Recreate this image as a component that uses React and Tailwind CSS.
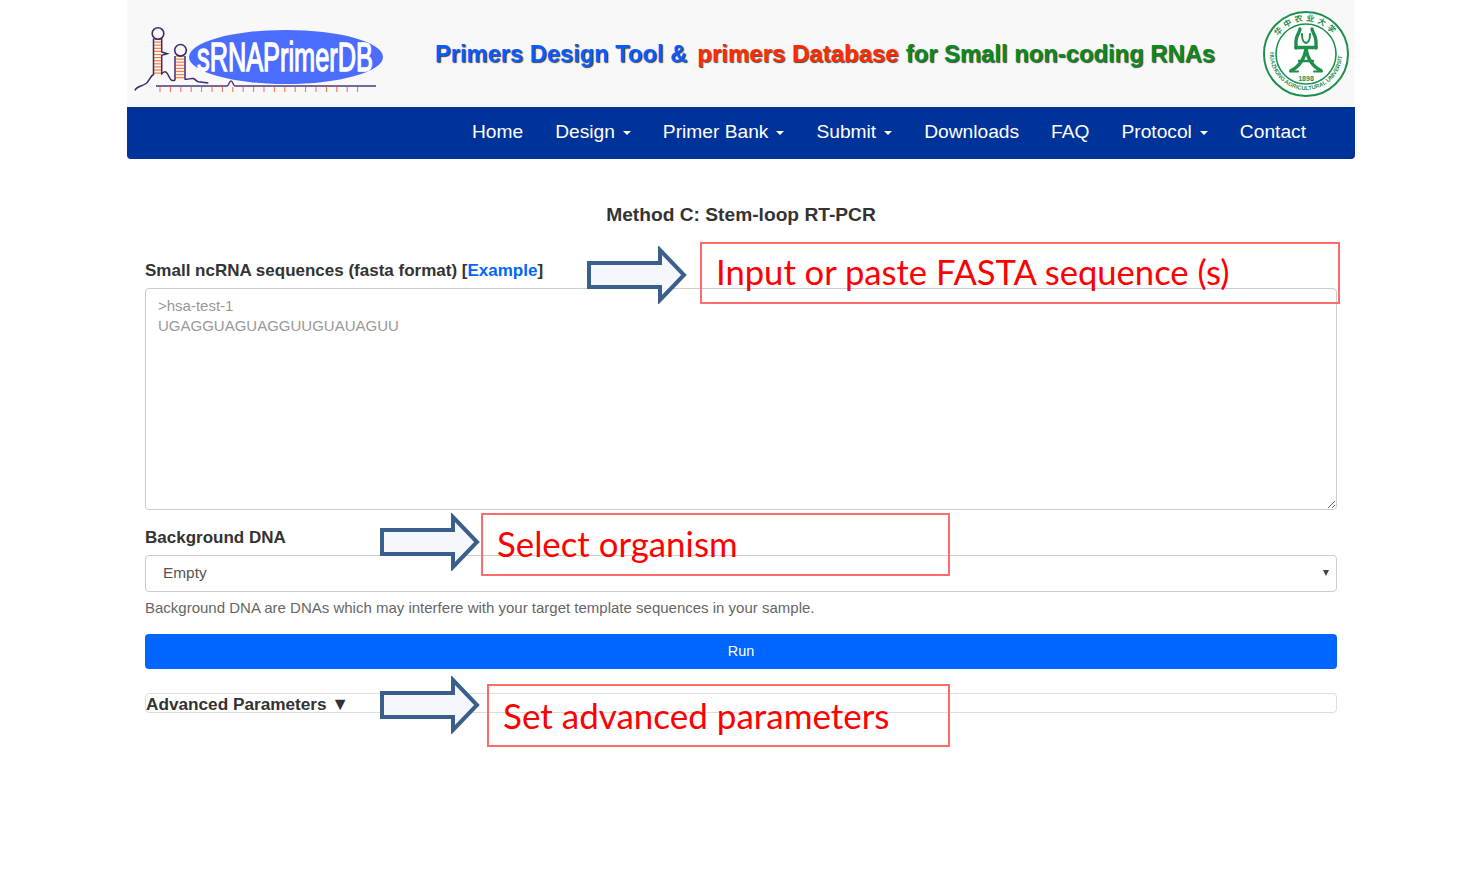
const NAV = [
  ["Home", false],
  ["Design", true],
  ["Primer Bank", true],
  ["Submit", true],
  ["Downloads", false],
  ["FAQ", false],
  ["Protocol", true],
  ["Contact", false],
];

function Logo() {
  const ticks = [];
  for (let x = 33; x <= 238; x += 10.4) ticks.push(x);
  const rungs1 = [];
  for (let y = 39; y <= 74; y += 3.1) rungs1.push(y);
  const rungs2 = [];
  for (let y = 56; y <= 80; y += 3.1) rungs2.push(y);
  return (
    <svg width="300" height="107" viewBox="0 0 300 107" className="shrink-0 overflow-visible" fill="none">
      <ellipse cx="159" cy="57" rx="97" ry="27" fill="#4a6cff" />
      <text transform="translate(70 71) scale(0.633 1)" fill="#fff" fontFamily="'Liberation Sans',sans-serif" fontSize="40" stroke="#fff" strokeWidth="1.4">sRNAPrimerDB</text>
      {rungs1.map((y) => (
        <line key={y} x1="27" x2="34" y1={y} y2={y} stroke="#ff7a45" strokeWidth="1.2" />
      ))}
      {rungs2.map((y) => (
        <line key={y} x1="49" x2="57" y1={y} y2={y} stroke="#ff7a45" strokeWidth="1.2" />
      ))}
      <circle cx="31" cy="33.5" r="5.8" stroke="#3d2a6b" strokeWidth="1.6" />
      <circle cx="53.5" cy="50.3" r="5.8" stroke="#3d2a6b" strokeWidth="1.6" />
      <path d="M8 90.5c1-4 7-4 11-7 3-2 4-7 7.500-9V38.500M34.700 38.500V52l5.600 1.700-5.600 1.600V73.700c2-2 3.500-2.500 5-1 2 2 3 7 5 7.600 2 .5 3 0 3.300-.5V56M58 56V79c3 1 5-1 8.300-.5 2 .5 3 3 5 3.300l10 1.200" stroke="#3d2a6b" strokeWidth="1.5" />
      <path d="M29 86h71c2 0 2-5 4-5s2 5 4 5h141" stroke="#4a3a78" strokeWidth="1.4" />
      {ticks.map((x) => (
        <line key={x} x1={x} x2={x} y1="87" y2="92" stroke="#ff6a3a" strokeWidth="1" />
      ))}
    </svg>
  );
}

function Seal() {
  const g = "#1f8f4e";
  return (
    <svg width="88" height="88" viewBox="0 0 88 88" className="shrink-0 ml-auto mr-[5px] overflow-visible" fill="none">
      <circle cx="44" cy="44" r="42" stroke={g} strokeWidth="2" fill="#fff" />
      <circle cx="44" cy="44" r="30" stroke={g} strokeWidth="1.6" />
      <defs>
        <path id="sealBottom" d="M8 44a36 36 0 0 0 72 0" />
        <path id="sealTop" d="M11 44a33 33 0 0 1 66 0" />
      </defs>
      <text fontSize="5.800" fontWeight="700" fill={g} fontFamily="'Liberation Sans',sans-serif">
        <textPath href="#sealBottom" startOffset="50%" textAnchor="middle">HUAZHONG AGRICULTURAL UNIVERSITY</textPath>
      </text>
      <text fontSize="8" fontWeight="700" fill={g} fontFamily="'Noto Sans CJK SC',sans-serif">
        <textPath href="#sealTop" startOffset="50%" textAnchor="middle" letterSpacing="3">华中农业大学</textPath>
      </text>
      <g stroke={g} strokeWidth="3.4" strokeLinecap="round">
        <path d="M38 19C37 24 34 26 34 31V38" />
        <path d="M50 19C51 24 54 26 54 31V38" />
        <path d="M34 37.500H54" />
        <path d="M44 38C43 48 37 57 29 60.500" />
        <path d="M44 38C45 48 51 57 59 60.500" />
        <path d="M37 51H51" strokeWidth="2.400" />
        <path d="M28 61.500H36M52 61.500H60" strokeWidth="2" />
        <path d="M40 24C40 30 41 32 44 33C47 32 48 30 48 24" strokeWidth="2" />
      </g>
      <text x="44" y="70.500" textAnchor="middle" fontSize="7" fontWeight="700" fill={g} fontFamily="'Liberation Sans',sans-serif">1898</text>
    </svg>
  );
}

function Arrow({ className }) {
  return (
    <svg width="100" height="58" viewBox="0 0 100 58" className={"absolute " + className} fill="none">
      <path d="M2 17H73V4L97 29 73 54V41H2Z" fill="#f3f6fb" fillOpacity="0.92" stroke="#3a5f8c" strokeWidth="4" />
    </svg>
  );
}

function Note({ className, children }) {
  return (
    <div className={"absolute border-2 border-[#ff6b6b] text-[#ff0000] leading-none flex items-center pl-[14px] pb-[1px] font-['Lato',sans-serif] whitespace-nowrap " + className}>
      {children}
    </div>
  );
}

export default function App() {
  return (
    <div className="relative mx-auto w-[1228px] h-[894px] font-['Liberation_Sans',Arial,sans-serif] text-[#333]">
      <header className="flex items-center h-[107px] bg-[#f8f8f8]">
        <Logo />
        <h1 className="ml-[8px] pt-[2px] text-[23.7px] font-bold whitespace-nowrap [text-shadow:1px_1px_1px_#444]">
          <span className="text-[#0a5cff]">Primers Design Tool &amp;</span>
          <span className="text-[#ff2a00] ml-[10px] text-[24px]">primers Database</span>
          <span className="text-[#0b8a1f] ml-[7px] text-[23.8px]">for Small non-coding RNAs</span>
        </h1>
        <Seal />
      </header>

      <nav className="flex items-center justify-end h-[52px] pr-[33px] pb-[1px] bg-[#003399] rounded-b-[4px] text-white text-[19.2px]">
        {NAV.map(([label, caret]) => (
          <a key={label} className="flex items-center px-[16px] whitespace-nowrap">
            {label}
            {caret && <span className="ml-[8px] mt-[2px] border-x-[4px] border-x-transparent border-t-[4px] border-t-white" />}
          </a>
        ))}
      </nav>

      <main className="px-[18px]">
        <h2 className="mt-[44px] text-center text-[19.2px] leading-[24px] font-bold">Method C: Stem-loop RT-PCR</h2>

        <label className="block mt-[32px] text-[17px] leading-[24px] font-bold">
          Small ncRNA sequences (fasta format) [<a className="text-[#0066ff]">Example</a>]
        </label>
        <textarea
          className="block mt-[5px] w-full h-[222px] px-[12px] py-[7px] border border-[#ccc] rounded-[4px] bg-white text-[15px] leading-[20px] placeholder:text-[#999] font-['Liberation_Sans',sans-serif]"
          placeholder={">hsa-test-1\nUGAGGUAGUAGGUUGUAUAGUU"}
        />

        <label className="block mt-[16px] text-[17px] leading-[24px] font-bold">Background DNA</label>
        <div className="relative mt-[5px]">
          <select className="block w-full h-[37px] pl-[17px] pr-[24px] pb-[2px] appearance-none border border-[#ccc] rounded-[4px] bg-white text-[15.4px] text-[#555]">
            <option>Empty</option>
          </select>
          <span className="absolute right-[8px] top-[15px] border-x-[3.5px] border-x-transparent border-t-[6px] border-t-[#444]" />
        </div>
        <p className="mt-[6px] text-[15px] leading-[20px] text-[#666]">
          Background DNA are DNAs which may interfere with your target template sequences in your sample.
        </p>

        <button className="block mt-[16px] w-full h-[35px] pt-[1px] rounded-[4px] bg-[#0066ff] text-white text-[14.4px]">Run</button>

        <div className="mt-[24px] h-[20px] border border-[#ddd] rounded-[4px] text-[17.2px] leading-[20px] font-bold whitespace-nowrap">
          Advanced Parameters <span className="text-[18px]">▼</span>
        </div>
      </main>

      <Arrow className="left-[460px] top-[246px]" />
      <Note className="left-[573px] top-[242px] w-[640px] h-[62px] text-[34.6px]">Input or paste FASTA sequence (s)</Note>
      <Arrow className="left-[253px] top-[513px]" />
      <Note className="left-[354px] top-[513px] w-[469px] h-[63px] text-[34.8px]">Select organism</Note>
      <Arrow className="left-[253px] top-[676px]" />
      <Note className="left-[360px] top-[684px] w-[463px] h-[63px] text-[35px]">Set advanced parameters</Note>
    </div>
  );
}
